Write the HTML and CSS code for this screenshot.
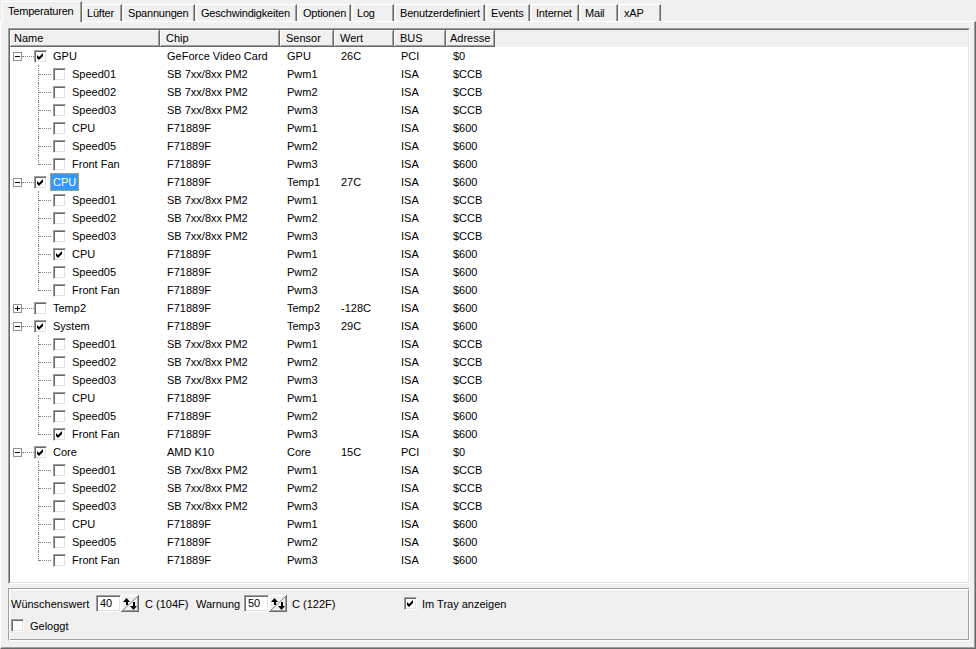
FILE: index.html
```html
<!DOCTYPE html>
<html lang="de">
<head>
    <meta charset="UTF-8">
    <title>Temperaturen</title>
    <link rel="stylesheet" href="styles.css">
</head>
<body>
    <div class="tabs">
        <div class="tab active">Temperaturen</div>
        <div class="tab">Lüfter</div>
        <div class="tab">Spannungen</div>
        <div class="tab">Geschwindigkeiten</div>
        <div class="tab">Optionen</div>
        <div class="tab">Log</div>
        <div class="tab">Benutzerdefiniert</div>
        <div class="tab">Events</div>
        <div class="tab">Internet</div>
        <div class="tab">Mail</div>
        <div class="tab">xAP</div>
    </div>

    <div class="page">
        <div class="tree">
            <div class="tree-in">
                <div class="thead">
                    <div class="hc w-name hn">Name</div>
                    <div class="hc w-chip">Chip</div>
                    <div class="hc w-sen">Sensor</div>
                    <div class="hc w-val">Wert</div>
                    <div class="hc w-bus">BUS</div>
                    <div class="hc w-adr ha">Adresse</div>
                </div>

                <!-- GPU -->
                <div class="row">
                    <div class="w-name root"><span class="exp"><svg width="9" height="9"><rect x=".5" y=".5" width="8" height="8" fill="#fff" stroke="#919191"/><path d="M2 4.5H7" stroke="#000"/></svg></span><span class="hl"></span><span class="cb"><svg width="9" height="9"><path d="M1 3L3 5L7 1V4L3 8L1 6Z"/></svg></span><span class="lbl">GPU</span></div>
                    <div class="cell w-chip">GeForce Video Card</div><div class="cell w-sen">GPU</div><div class="cell w-val">26C</div><div class="cell w-bus">PCI</div><div class="cell w-adr">$0</div>
                </div>
                <div class="row"><div class="w-name kid"><span class="guide"></span><span class="cb"></span><span class="lbl">Speed01</span></div><div class="cell w-chip">SB 7xx/8xx PM2</div><div class="cell w-sen">Pwm1</div><div class="cell w-val"></div><div class="cell w-bus">ISA</div><div class="cell w-adr">$CCB</div></div>
                <div class="row"><div class="w-name kid"><span class="guide"></span><span class="cb"></span><span class="lbl">Speed02</span></div><div class="cell w-chip">SB 7xx/8xx PM2</div><div class="cell w-sen">Pwm2</div><div class="cell w-val"></div><div class="cell w-bus">ISA</div><div class="cell w-adr">$CCB</div></div>
                <div class="row"><div class="w-name kid"><span class="guide"></span><span class="cb"></span><span class="lbl">Speed03</span></div><div class="cell w-chip">SB 7xx/8xx PM2</div><div class="cell w-sen">Pwm3</div><div class="cell w-val"></div><div class="cell w-bus">ISA</div><div class="cell w-adr">$CCB</div></div>
                <div class="row"><div class="w-name kid"><span class="guide"></span><span class="cb"></span><span class="lbl">CPU</span></div><div class="cell w-chip">F71889F</div><div class="cell w-sen">Pwm1</div><div class="cell w-val"></div><div class="cell w-bus">ISA</div><div class="cell w-adr">$600</div></div>
                <div class="row"><div class="w-name kid"><span class="guide"></span><span class="cb"></span><span class="lbl">Speed05</span></div><div class="cell w-chip">F71889F</div><div class="cell w-sen">Pwm2</div><div class="cell w-val"></div><div class="cell w-bus">ISA</div><div class="cell w-adr">$600</div></div>
                <div class="row"><div class="w-name kid"><span class="guide last"></span><span class="cb"></span><span class="lbl">Front Fan</span></div><div class="cell w-chip">F71889F</div><div class="cell w-sen">Pwm3</div><div class="cell w-val"></div><div class="cell w-bus">ISA</div><div class="cell w-adr">$600</div></div>

                <!-- CPU -->
                <div class="row">
                    <div class="w-name root"><span class="exp"><svg width="9" height="9"><rect x=".5" y=".5" width="8" height="8" fill="#fff" stroke="#919191"/><path d="M2 4.5H7" stroke="#000"/></svg></span><span class="hl"></span><span class="cb"><svg width="9" height="9"><path d="M1 3L3 5L7 1V4L3 8L1 6Z"/></svg></span><span class="lbl sel">CPU</span></div>
                    <div class="cell w-chip">F71889F</div><div class="cell w-sen">Temp1</div><div class="cell w-val">27C</div><div class="cell w-bus">ISA</div><div class="cell w-adr">$600</div>
                </div>
                <div class="row"><div class="w-name kid"><span class="guide"></span><span class="cb"></span><span class="lbl">Speed01</span></div><div class="cell w-chip">SB 7xx/8xx PM2</div><div class="cell w-sen">Pwm1</div><div class="cell w-val"></div><div class="cell w-bus">ISA</div><div class="cell w-adr">$CCB</div></div>
                <div class="row"><div class="w-name kid"><span class="guide"></span><span class="cb"></span><span class="lbl">Speed02</span></div><div class="cell w-chip">SB 7xx/8xx PM2</div><div class="cell w-sen">Pwm2</div><div class="cell w-val"></div><div class="cell w-bus">ISA</div><div class="cell w-adr">$CCB</div></div>
                <div class="row"><div class="w-name kid"><span class="guide"></span><span class="cb"></span><span class="lbl">Speed03</span></div><div class="cell w-chip">SB 7xx/8xx PM2</div><div class="cell w-sen">Pwm3</div><div class="cell w-val"></div><div class="cell w-bus">ISA</div><div class="cell w-adr">$CCB</div></div>
                <div class="row"><div class="w-name kid"><span class="guide"></span><span class="cb"><svg width="9" height="9"><path d="M1 3L3 5L7 1V4L3 8L1 6Z"/></svg></span><span class="lbl">CPU</span></div><div class="cell w-chip">F71889F</div><div class="cell w-sen">Pwm1</div><div class="cell w-val"></div><div class="cell w-bus">ISA</div><div class="cell w-adr">$600</div></div>
                <div class="row"><div class="w-name kid"><span class="guide"></span><span class="cb"></span><span class="lbl">Speed05</span></div><div class="cell w-chip">F71889F</div><div class="cell w-sen">Pwm2</div><div class="cell w-val"></div><div class="cell w-bus">ISA</div><div class="cell w-adr">$600</div></div>
                <div class="row"><div class="w-name kid"><span class="guide last"></span><span class="cb"></span><span class="lbl">Front Fan</span></div><div class="cell w-chip">F71889F</div><div class="cell w-sen">Pwm3</div><div class="cell w-val"></div><div class="cell w-bus">ISA</div><div class="cell w-adr">$600</div></div>

                <!-- Temp2 (collapsed) -->
                <div class="row">
                    <div class="w-name root"><span class="exp"><svg width="9" height="9"><rect x=".5" y=".5" width="8" height="8" fill="#fff" stroke="#919191"/><path d="M2 4.5H7M4.5 2V7" stroke="#000"/></svg></span><span class="hl"></span><span class="cb"></span><span class="lbl">Temp2</span></div>
                    <div class="cell w-chip">F71889F</div><div class="cell w-sen">Temp2</div><div class="cell w-val">-128C</div><div class="cell w-bus">ISA</div><div class="cell w-adr">$600</div>
                </div>

                <!-- System -->
                <div class="row">
                    <div class="w-name root"><span class="exp"><svg width="9" height="9"><rect x=".5" y=".5" width="8" height="8" fill="#fff" stroke="#919191"/><path d="M2 4.5H7" stroke="#000"/></svg></span><span class="hl"></span><span class="cb"><svg width="9" height="9"><path d="M1 3L3 5L7 1V4L3 8L1 6Z"/></svg></span><span class="lbl">System</span></div>
                    <div class="cell w-chip">F71889F</div><div class="cell w-sen">Temp3</div><div class="cell w-val">29C</div><div class="cell w-bus">ISA</div><div class="cell w-adr">$600</div>
                </div>
                <div class="row"><div class="w-name kid"><span class="guide"></span><span class="cb"></span><span class="lbl">Speed01</span></div><div class="cell w-chip">SB 7xx/8xx PM2</div><div class="cell w-sen">Pwm1</div><div class="cell w-val"></div><div class="cell w-bus">ISA</div><div class="cell w-adr">$CCB</div></div>
                <div class="row"><div class="w-name kid"><span class="guide"></span><span class="cb"></span><span class="lbl">Speed02</span></div><div class="cell w-chip">SB 7xx/8xx PM2</div><div class="cell w-sen">Pwm2</div><div class="cell w-val"></div><div class="cell w-bus">ISA</div><div class="cell w-adr">$CCB</div></div>
                <div class="row"><div class="w-name kid"><span class="guide"></span><span class="cb"></span><span class="lbl">Speed03</span></div><div class="cell w-chip">SB 7xx/8xx PM2</div><div class="cell w-sen">Pwm3</div><div class="cell w-val"></div><div class="cell w-bus">ISA</div><div class="cell w-adr">$CCB</div></div>
                <div class="row"><div class="w-name kid"><span class="guide"></span><span class="cb"></span><span class="lbl">CPU</span></div><div class="cell w-chip">F71889F</div><div class="cell w-sen">Pwm1</div><div class="cell w-val"></div><div class="cell w-bus">ISA</div><div class="cell w-adr">$600</div></div>
                <div class="row"><div class="w-name kid"><span class="guide"></span><span class="cb"></span><span class="lbl">Speed05</span></div><div class="cell w-chip">F71889F</div><div class="cell w-sen">Pwm2</div><div class="cell w-val"></div><div class="cell w-bus">ISA</div><div class="cell w-adr">$600</div></div>
                <div class="row"><div class="w-name kid"><span class="guide last"></span><span class="cb"><svg width="9" height="9"><path d="M1 3L3 5L7 1V4L3 8L1 6Z"/></svg></span><span class="lbl">Front Fan</span></div><div class="cell w-chip">F71889F</div><div class="cell w-sen">Pwm3</div><div class="cell w-val"></div><div class="cell w-bus">ISA</div><div class="cell w-adr">$600</div></div>

                <!-- Core -->
                <div class="row">
                    <div class="w-name root"><span class="exp"><svg width="9" height="9"><rect x=".5" y=".5" width="8" height="8" fill="#fff" stroke="#919191"/><path d="M2 4.5H7" stroke="#000"/></svg></span><span class="hl"></span><span class="cb"><svg width="9" height="9"><path d="M1 3L3 5L7 1V4L3 8L1 6Z"/></svg></span><span class="lbl">Core</span></div>
                    <div class="cell w-chip">AMD K10</div><div class="cell w-sen">Core</div><div class="cell w-val">15C</div><div class="cell w-bus">PCI</div><div class="cell w-adr">$0</div>
                </div>
                <div class="row"><div class="w-name kid"><span class="guide"></span><span class="cb"></span><span class="lbl">Speed01</span></div><div class="cell w-chip">SB 7xx/8xx PM2</div><div class="cell w-sen">Pwm1</div><div class="cell w-val"></div><div class="cell w-bus">ISA</div><div class="cell w-adr">$CCB</div></div>
                <div class="row"><div class="w-name kid"><span class="guide"></span><span class="cb"></span><span class="lbl">Speed02</span></div><div class="cell w-chip">SB 7xx/8xx PM2</div><div class="cell w-sen">Pwm2</div><div class="cell w-val"></div><div class="cell w-bus">ISA</div><div class="cell w-adr">$CCB</div></div>
                <div class="row"><div class="w-name kid"><span class="guide"></span><span class="cb"></span><span class="lbl">Speed03</span></div><div class="cell w-chip">SB 7xx/8xx PM2</div><div class="cell w-sen">Pwm3</div><div class="cell w-val"></div><div class="cell w-bus">ISA</div><div class="cell w-adr">$CCB</div></div>
                <div class="row"><div class="w-name kid"><span class="guide"></span><span class="cb"></span><span class="lbl">CPU</span></div><div class="cell w-chip">F71889F</div><div class="cell w-sen">Pwm1</div><div class="cell w-val"></div><div class="cell w-bus">ISA</div><div class="cell w-adr">$600</div></div>
                <div class="row"><div class="w-name kid"><span class="guide"></span><span class="cb"></span><span class="lbl">Speed05</span></div><div class="cell w-chip">F71889F</div><div class="cell w-sen">Pwm2</div><div class="cell w-val"></div><div class="cell w-bus">ISA</div><div class="cell w-adr">$600</div></div>
                <div class="row"><div class="w-name kid"><span class="guide last"></span><span class="cb"></span><span class="lbl">Front Fan</span></div><div class="cell w-chip">F71889F</div><div class="cell w-sen">Pwm3</div><div class="cell w-val"></div><div class="cell w-bus">ISA</div><div class="cell w-adr">$600</div></div>
            </div>
        </div>

        <div class="group">
            <div class="grow">
                <span class="lab1">Wünschenswert</span>
                <span class="edit">40</span>
                <span class="spin"><svg width="18" height="17"><rect width="18" height="17" fill="#f0f0f0"/><path d="M0 .5H17M.5 0V17" stroke="#fff"/><path d="M17.5 0V17M0 16.5H18" stroke="#696969"/><path d="M16.5 1V16M1 15.5H17" stroke="#a0a0a0"/><path d="M2 15L16 2" stroke="#808080"/><path d="M2 7L5.5 3L9 7Z"/><path d="M5 7H7V10H5Z"/><path d="M9 11L12.5 15L16 11Z"/><path d="M12 7H14V11H12Z"/></svg></span>
                <span class="unit">C (104F)</span>
                <span class="lab2">Warnung</span>
                <span class="edit">50</span>
                <span class="spin"><svg width="18" height="17"><rect width="18" height="17" fill="#f0f0f0"/><path d="M0 .5H17M.5 0V17" stroke="#fff"/><path d="M17.5 0V17M0 16.5H18" stroke="#696969"/><path d="M16.5 1V16M1 15.5H17" stroke="#a0a0a0"/><path d="M2 15L16 2" stroke="#808080"/><path d="M2 7L5.5 3L9 7Z"/><path d="M5 7H7V10H5Z"/><path d="M9 11L12.5 15L16 11Z"/><path d="M12 7H14V11H12Z"/></svg></span>
                <span class="unit unit2">C (122F)</span>
                <span class="cb"><svg width="9" height="9"><path d="M1 3L3 5L7 1V4L3 8L1 6Z"/></svg></span>
                <span class="cb-text">Im Tray anzeigen</span>
            </div>
            <div class="grow grow2">
                <span class="cb"></span>
                <span class="cb-text log">Geloggt</span>
            </div>
        </div>
    </div>
</body>
</html>
```

FILE: styles.css
```css
body {
  margin:0;
  width:976px;
  height:649px;
  overflow:hidden;
  background:#f0f0f0;
  font-family:"Liberation Sans", Arial, sans-serif;
  font-size:11px;
  color:#000;
}

/* tab strip */
.tabs {
  height:21px;
  display:flex;
  align-items:flex-end;
  padding-left:2px;
}
.tab {
  height:17px;
  line-height:16px;
  padding-left:4px;
  margin-right:1px;
  box-sizing:border-box;
  border-top:1px solid #fff;
  border-left:1px solid #fff;
  border-right:1px solid #696969;
  box-shadow:inset -1px 0 #a0a0a0;
  letter-spacing:-0.2px;
  white-space:nowrap;
  overflow:hidden;
}
.tab.active {
  height:21px;
  line-height:19px;
  margin-bottom:-1px;
  margin-right:0;
  padding-left:5px;
  position:relative;
  background:#f0f0f0;
}
.tab:nth-child(1) { width:80px; }
.tab:nth-child(2) { width:40px; }
.tab:nth-child(3) { width:72px; }
.tab:nth-child(4) { width:101px; }
.tab:nth-child(5) { width:53px; }
.tab:nth-child(6) { width:42px; }
.tab:nth-child(7) { width:90px; }
.tab:nth-child(8) { width:44px; }
.tab:nth-child(9) { width:48px; }
.tab:nth-child(10) { width:38px; }
.tab:nth-child(11) { width:42px; }

/* page frame */
.page {
  height:628px;
  box-sizing:border-box;
  padding:6px 5px 7px 7px;
  border-top:1px solid #fff;
  border-left:1px solid #fff;
  border-right:1px solid #696969;
  border-bottom:1px solid #696969;
  box-shadow:inset -1px -1px #a0a0a0;
}

/* tree list */
.tree {
  height:556px;
  box-sizing:border-box;
  border:1px solid;
  border-color:#a0a0a0 #fff #fff #a0a0a0;
}
.tree-in {
  height:100%;
  box-sizing:border-box;
  border:1px solid;
  border-color:#696969 #e3e3e3 #e3e3e3 #696969;
  background:#fff;
  overflow:hidden;
}
.thead {
  display:flex;
  height:17px;
  background:#f0f0f0;
}
.hc {
  height:17px;
  line-height:16px;
  padding-left:6px;
  box-sizing:border-box;
  border-right:1px solid #696969;
  border-bottom:1px solid #696969;
  box-shadow:inset 1px 1px #fff, inset -1px -1px #a0a0a0;
  white-space:nowrap;
  overflow:hidden;
}
.hc.hn {
  padding-left:4px;
}
.hc.ha {
  padding-left:4px;
}
.w-name { width:150px; }
.w-chip { width:120px; }
.w-sen { width:54px; }
.w-val { width:60px; }
.w-bus { width:52px; }
.w-adr { width:49px; }

.row {
  display:flex;
  align-items:center;
  height:18px;
}
.cell {
  padding-left:7px;
  box-sizing:border-box;
  white-space:nowrap;
}
.row .w-name {
  display:flex;
  align-items:center;
  height:18px;
  box-sizing:border-box;
}
.row .root {
  padding-left:3px;
}
.row .kid {
  padding-left:28px;
}
.exp {
  width:9px;
  height:9px;
}
.exp svg {
  display:block;
}
.hl {
  width:12px;
  border-top:1px dotted #808080;
}
.guide {
  width:13px;
  height:18px;
  box-sizing:border-box;
  border-left:1px dotted #808080;
  display:flex;
  align-items:center;
  margin-right:2px;
}
.guide::after {
  content:"";
  width:12px;
  border-top:1px dotted #808080;
}
.guide.last {
  height:10px;
  align-self:flex-start;
  align-items:flex-end;
}
.cb {
  width:13px;
  height:13px;
  flex:none;
  box-sizing:border-box;
  border:1px solid;
  border-color:#a0a0a0 #fff #fff #a0a0a0;
  box-shadow:inset 1px 1px #696969, inset -1px -1px #e3e3e3;
  background:#fff;
  display:flex;
  align-items:center;
  justify-content:center;
}
.cb svg {
  display:block;
}
.lbl {
  margin-left:3px;
  padding:0 3px;
  height:18px;
  line-height:18px;
  box-sizing:border-box;
  white-space:nowrap;
}
.lbl.sel {
  background:#3399ff;
  color:#fff;
  outline:1px dotted #f0a848;
  outline-offset:-1px;
}

/* options group */
.group {
  margin-top:4px;
  height:53px;
  box-sizing:border-box;
  padding:6px 0 0 2px;
  border:1px solid;
  border-color:#a0a0a0 #fff #fff #a0a0a0;
  box-shadow:inset 1px 1px #fff, inset -1px -1px #a0a0a0;
}
.grow {
  display:flex;
  align-items:center;
  height:17px;
}
.grow2 {
  height:13px;
  margin-top:7px;
}
.lab1 { width:85px; }
.lab2 { width:48px; }
.edit {
  width:25px;
  height:17px;
  box-sizing:border-box;
  padding-left:3px;
  line-height:15px;
  border:1px solid;
  border-color:#a0a0a0 #fff #fff #a0a0a0;
  box-shadow:inset 1px 1px #696969, inset -1px -1px #e3e3e3;
  background:#fff;
}
.spin {
  width:18px;
  height:17px;
}
.spin svg {
  display:block;
}
.unit {
  margin-left:6px;
  width:51px;
}
.unit2 {
  margin-left:5px;
  width:112px;
}
.cb-text {
  margin-left:5px;
}
.cb-text.log {
  margin-left:6px;
}
```
